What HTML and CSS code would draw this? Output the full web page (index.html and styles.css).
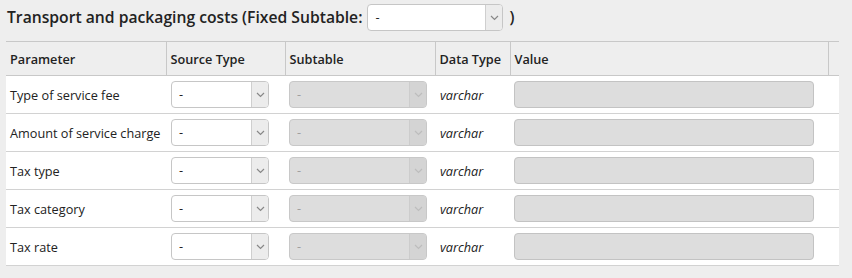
FILE: index.html
```html
<!DOCTYPE html>
<html>
<head>
<meta charset="utf-8">
<link rel="stylesheet" href="styles.css">
</head>
<body>
<div class="page">
  <h2 class="title">Transport and packaging costs (Fixed Subtable:
    <span class="sel sel-title"><span class="sel-val">-</span><span class="sel-arrow"><svg width="9" height="6" viewBox="0 0 9 6"><path d="M1 1 L4.5 4.5 L8 1" fill="none" stroke="#888" stroke-width="1.2"/></svg></span></span>
    <span class="paren">)</span></h2>
  <table class="grid">
    <colgroup>
      <col class="c1"><col class="c2"><col class="c3"><col class="c4"><col class="c5"><col class="c6">
    </colgroup>
    <thead>
      <tr><th>Parameter</th><th>Source Type</th><th>Subtable</th><th>Data Type</th><th>Value</th><th></th></tr>
    </thead>
    <tbody>
      <tr><td>Type of service fee</td><td><span class="sel sel-src"><span class="sel-val">-</span><span class="sel-arrow"><svg width="9" height="6" viewBox="0 0 9 6"><path d="M1 1 L4.5 4.5 L8 1" fill="none" stroke="#888" stroke-width="1.2"/></svg></span></span></td><td><span class="sel sel-sub dis"><span class="sel-val">-</span><span class="sel-arrow"><svg width="9" height="6" viewBox="0 0 9 6"><path d="M1 1 L4.5 4.5 L8 1" fill="none" stroke="#bdbdbd" stroke-width="1.2"/></svg></span></span></td><td class="dt">varchar</td><td><span class="inp"></span></td><td></td></tr>
      <tr><td>Amount of service charge</td><td><span class="sel sel-src"><span class="sel-val">-</span><span class="sel-arrow"><svg width="9" height="6" viewBox="0 0 9 6"><path d="M1 1 L4.5 4.5 L8 1" fill="none" stroke="#888" stroke-width="1.2"/></svg></span></span></td><td><span class="sel sel-sub dis"><span class="sel-val">-</span><span class="sel-arrow"><svg width="9" height="6" viewBox="0 0 9 6"><path d="M1 1 L4.5 4.5 L8 1" fill="none" stroke="#bdbdbd" stroke-width="1.2"/></svg></span></span></td><td class="dt">varchar</td><td><span class="inp"></span></td><td></td></tr>
      <tr><td>Tax type</td><td><span class="sel sel-src"><span class="sel-val">-</span><span class="sel-arrow"><svg width="9" height="6" viewBox="0 0 9 6"><path d="M1 1 L4.5 4.5 L8 1" fill="none" stroke="#888" stroke-width="1.2"/></svg></span></span></td><td><span class="sel sel-sub dis"><span class="sel-val">-</span><span class="sel-arrow"><svg width="9" height="6" viewBox="0 0 9 6"><path d="M1 1 L4.5 4.5 L8 1" fill="none" stroke="#bdbdbd" stroke-width="1.2"/></svg></span></span></td><td class="dt">varchar</td><td><span class="inp"></span></td><td></td></tr>
      <tr><td>Tax category</td><td><span class="sel sel-src"><span class="sel-val">-</span><span class="sel-arrow"><svg width="9" height="6" viewBox="0 0 9 6"><path d="M1 1 L4.5 4.5 L8 1" fill="none" stroke="#888" stroke-width="1.2"/></svg></span></span></td><td><span class="sel sel-sub dis"><span class="sel-val">-</span><span class="sel-arrow"><svg width="9" height="6" viewBox="0 0 9 6"><path d="M1 1 L4.5 4.5 L8 1" fill="none" stroke="#bdbdbd" stroke-width="1.2"/></svg></span></span></td><td class="dt">varchar</td><td><span class="inp"></span></td><td></td></tr>
      <tr><td>Tax rate</td><td><span class="sel sel-src"><span class="sel-val">-</span><span class="sel-arrow"><svg width="9" height="6" viewBox="0 0 9 6"><path d="M1 1 L4.5 4.5 L8 1" fill="none" stroke="#888" stroke-width="1.2"/></svg></span></span></td><td><span class="sel sel-sub dis"><span class="sel-val">-</span><span class="sel-arrow"><svg width="9" height="6" viewBox="0 0 9 6"><path d="M1 1 L4.5 4.5 L8 1" fill="none" stroke="#bdbdbd" stroke-width="1.2"/></svg></span></span></td><td class="dt">varchar</td><td><span class="inp"></span></td><td></td></tr>
    </tbody>
  </table>
</div>
</body>
</html>
```
FILE: styles.css
```css
html, body {
  margin: 0;
  padding: 0;
  background: #eeeeee;
}
body {
  font-family: "Open Sans", "DejaVu Sans", sans-serif;
  font-size: 12.7px;
  color: #222;
}
.page {
  padding: 4px 13px 0 6px;
}
.title {
  margin: 0;
  font-size: 15.7px;
  font-weight: 600;
  color: #222;
  height: 37px;
  display: flex;
  align-items: flex-start;
  padding-left: 1px;
  line-height: 27px;
}
.sel {
  display: inline-flex;
  box-sizing: border-box;
  border: 1px solid #c6c6c6;
  border-radius: 4px;
  background: #fff;
  overflow: hidden;
  vertical-align: middle;
  font-weight: 400;
}
.sel-title {
  width: 136px;
  height: 27px;
  margin-left: 5px;
}
.paren {
  margin-left: 6px;
}
.sel-val {
  flex: 1;
  padding-left: 7px;
  line-height: 24px;
  font-size: 12.7px;
  color: #222;
}
.sel-arrow {
  width: 16px;
  border-left: 1px solid #cfcfcf;
  background: #ececec;
  display: flex;
  align-items: center;
  justify-content: center;
}
.grid {
  width: 833px;
  border-collapse: collapse;
  table-layout: fixed;
}
col.c1 { width: 160px; }
col.c2 { width: 119px; }
col.c3 { width: 150px; }
col.c4 { width: 75px; }
col.c5 { width: 318px; }
col.c6 { width: 11px; }
.grid th {
  text-align: left;
  font-weight: 600;
  font-size: 12.7px;
  color: #222;
  height: 33px;
  padding: 0 4px;
  border-top: 1px solid #c8c8c8;
  border-bottom: 1px solid #c8c8c8;
  border-left: 1px solid #c8c8c8;
  background: #eeeeee;
}
.grid th:first-child { border-left: none; }
.grid td {
  background: #fff;
  height: 37px;
  padding: 0 4px;
  border-bottom: 1px solid #d2d2d2;
  white-space: nowrap;
  font-size: 12.7px;
  color: #222;
}
.grid td:first-child { padding-left: 4px; }
.grid td:nth-child(2) { padding-left: 5px; }
.grid td:nth-child(3) { padding-left: 4px; }
.grid td:nth-child(4) { padding-left: 5px; }
.sel-src {
  width: 98px;
  height: 27px;
}
.sel-sub {
  width: 138px;
  height: 27px;
}
.dis {
  background: #dddddd;
  border-color: #c8c8c8;
}
.dis .sel-val { color: #a0a0a0; }
.dis .sel-arrow {
  background: #d4d4d4;
  border-left-color: #cccccc;
}
.dt { font-style: italic; }
.inp {
  display: block;
  box-sizing: border-box;
  width: 300px;
  height: 27px;
  background: #dddddd;
  border: 1px solid #c3c3c3;
  border-radius: 4px;
}
```
